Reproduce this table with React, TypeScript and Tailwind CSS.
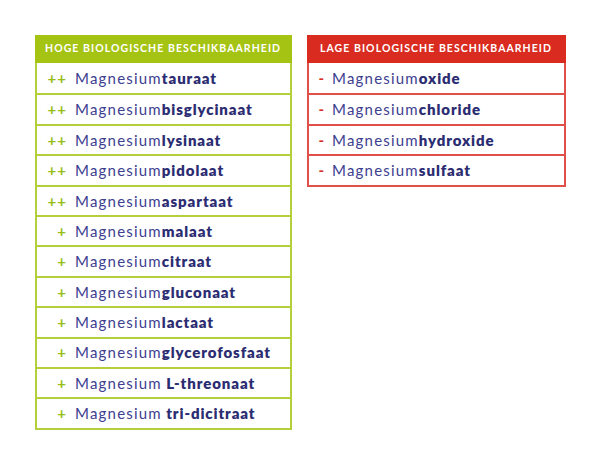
const high: [string, string, string][] = [
  ['++', 'Magnesium', 'tauraat'],
  ['++', 'Magnesium', 'bisglycinaat'],
  ['++', 'Magnesium', 'lysinaat'],
  ['++', 'Magnesium', 'pidolaat'],
  ['++', 'Magnesium', 'aspartaat'],
  ['+', 'Magnesium', 'malaat'],
  ['+', 'Magnesium', 'citraat'],
  ['+', 'Magnesium', 'gluconaat'],
  ['+', 'Magnesium', 'lactaat'],
  ['+', 'Magnesium', 'glycerofosfaat'],
  ['+', 'Magnesium', ' L-threonaat'],
  ['+', 'Magnesium', ' tri-dicitraat'],
]

const low: [string, string, string][] = [
  ['-', 'Magnesium', 'oxide'],
  ['-', 'Magnesium', 'chloride'],
  ['-', 'Magnesium', 'hydroxide'],
  ['-', 'Magnesium', 'sulfaat'],
]

function Table({
  title,
  rows,
  variant,
}: {
  title: string
  rows: [string, string, string][]
  variant: 'high' | 'low'
}) {
  const isHigh = variant === 'high'
  return (
    <div className={isHigh ? 'w-[257px]' : 'w-[259px]'}>
      {/* Header */}
      <div
        className={`h-[28px] flex items-center text-white font-bold text-[10.5px] tracking-[1.05px] uppercase ${
          isHigh ? 'bg-[#a5c312] pl-[10px]' : 'bg-[#d92b1f] pl-[13px]'
        }`}
      >
        {title}
      </div>

      {/* Rows */}
      <div
        className={`border-x-2 border-b-2 ${
          isHigh ? 'border-[#b4cf3c]' : 'border-[#de5048]'
        }`}
      >
        {rows.map(([sign, base, suffix], i) => (
          <div
            key={i}
            className={`h-[30.4px] flex items-center ${i > 0 ? 'border-t-2' : ''} ${
              isHigh ? 'border-[#b4cf3c]' : 'border-[#de5048]'
            }`}
          >
            <span
              className={`text-right font-bold text-[15px] ${
                isHigh ? 'w-[30px] text-[#95bd14] tracking-[1px]' : 'w-[15px] text-[#d92b1f]'
              }`}
            >
              {sign}
            </span>
            <span className="whitespace-pre text-[15px] ml-[8px]">
              <span className="font-normal tracking-[1.2px] text-[#3d4090]">{base}</span>
              <span className="font-extrabold tracking-[0.9px] text-[#2b2c72]">{suffix}</span>
            </span>
          </div>
        ))}
      </div>
    </div>
  )
}

export default function App() {
  return (
    <div
      className="w-[600px] h-[464px] bg-white flex items-start gap-[15px] pt-[35px] pl-[35px]"
      style={{ fontFamily: 'Lato, "Open Sans", sans-serif' }}
    >
      <Table title="Hoge biologische beschikbaarheid" rows={high} variant="high" />
      <Table title="Lage biologische beschikbaarheid" rows={low} variant="low" />
    </div>
  )
}
